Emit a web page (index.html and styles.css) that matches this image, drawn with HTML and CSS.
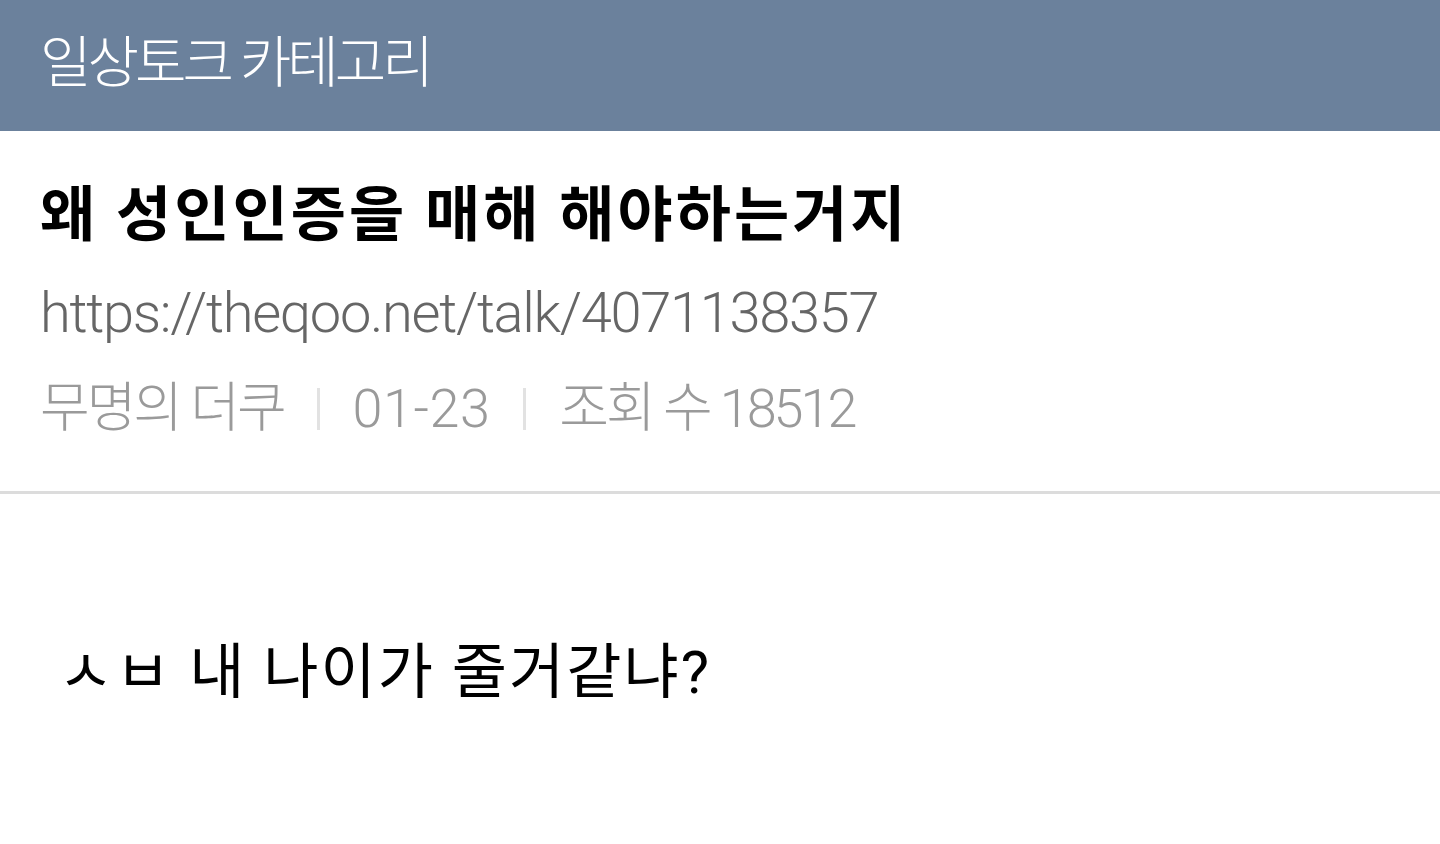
FILE: index.html
```html
<!DOCTYPE html>
<html lang="ko">
<head>
<meta charset="utf-8">
<title>일상토크 카테고리</title>
<link rel="stylesheet" href="styles.css">
</head>
<body>
<header class="topbar">
  <h1 class="topbar-title">일상토크 카테고리</h1>
</header>
<section class="post-head">
  <h2 class="post-title">왜 성인인증을 매해 해야하는거지</h2>
  <div class="post-url">https://theqoo.net/talk/4071138357</div>
  <div class="post-meta">
    <span class="meta-item">무명의 더쿠</span>
    <span class="meta-sep"></span>
    <span class="meta-item meta-date">01-23</span>
    <span class="meta-sep"></span>
    <span class="meta-item">조회 수 18512</span>
  </div>
</section>
<article class="post-body">
  <p class="post-text">ㅅㅂ 내 나이가 줄거같냐?</p>
</article>
</body>
</html>
```
FILE: styles.css
```css
* { box-sizing: border-box; }

html, body {
  margin: 0;
  padding: 0;
  background: #ffffff;
}

body {
  font-family: "Roboto", "Noto Sans CJK KR", sans-serif;
  color: #000;
}

.topbar {
  height: 131px;
  background: #6b819c;
  display: flex;
  align-items: center;
  padding: 0 40px;
}

.topbar-title {
  margin: 0;
  font-size: 56px;
  font-weight: 300;
  letter-spacing: -4px;
  color: #ffffff;
  line-height: 1;
  padding-bottom: 6px;
}

.post-head {
  padding: 53px 40px 0;
  height: 363px;
  border-bottom: 3px solid #dcdcdc;
}

.post-title {
  margin: 0;
  font-size: 60px;
  font-weight: 700;
  letter-spacing: 3px;
  line-height: 64px;
}

.post-url {
  margin-top: 35px;
  font-size: 56px;
  font-weight: 300;
  letter-spacing: -1.3px;
  color: #666666;
  line-height: 60px;
}

.post-meta {
  margin-top: 36px;
  display: flex;
  align-items: center;
  gap: 33px;
  font-size: 54px;
  font-weight: 300;
  letter-spacing: -3px;
  color: #9a9a9a;
  line-height: 60px;
}

.meta-date {
  letter-spacing: 0.5px;
}

.meta-sep {
  width: 3px;
  height: 42px;
  background: #e2e2e2;
}

.post-body {
  padding: 147px 58px 0;
}

.post-text {
  margin: 0;
  font-size: 60px;
  font-weight: 400;
  letter-spacing: 2px;
  line-height: 64px;
}
```
